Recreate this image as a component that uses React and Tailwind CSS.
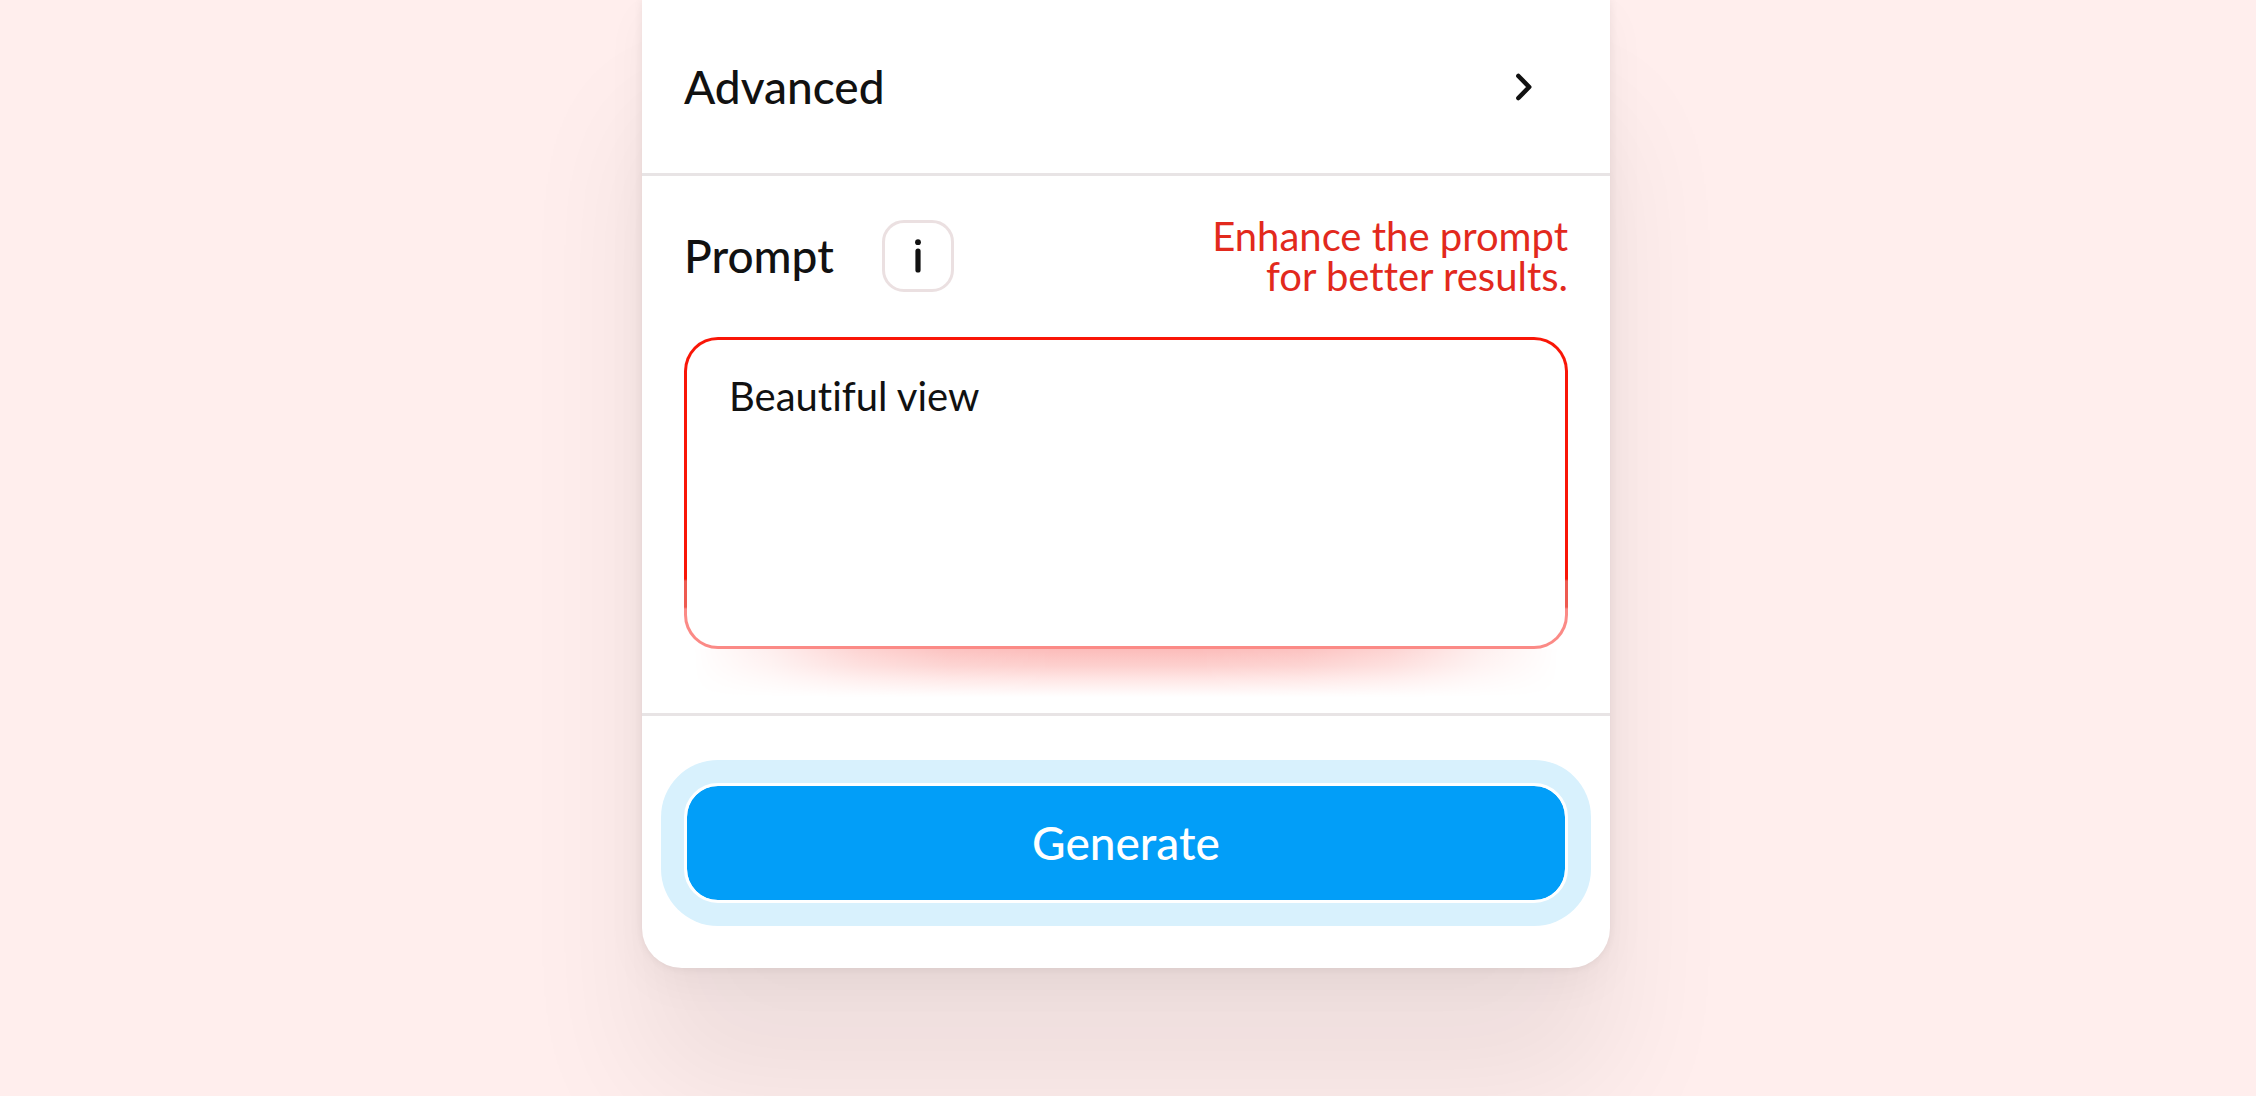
import React, { useState } from 'react';

function ChevronIcon() {
    return (
        <svg className="w-4 h-7" viewBox="0 0 16 28" fill="none" stroke="currentColor" strokeWidth="4.6" strokeLinecap="round" strokeLinejoin="round" aria-hidden="true">
            <path d="M2.4 3L13.2 14L2.4 25" />
        </svg>
    );
}

function InfoIcon() {
    return (
        <svg className="w-2 h-9" viewBox="0 0 8 36" fill="currentColor" aria-hidden="true">
            <circle cx="4" cy="4.2" r="2.9" />
            <rect x="1.4" y="10.5" width="5.2" height="24" rx="2.6" />
        </svg>
    );
}

function App() {
    const [prompt, setPrompt] = useState('Beautiful view');

    return (
        <div className="min-h-screen bg-[#ffeeed] pr-5 pl-4 font-['Lato',sans-serif] text-[#111111] [font-variant-ligatures:none]">
            <main className="mx-auto max-w-[968px] rounded-b-[40px] bg-white shadow-[0_0_10px_rgba(0,0,0,0.07),0_16px_44px_rgba(0,0,0,0.04),0_120px_130px_rgba(0,0,0,0.07)]">
                <button type="button" className="flex h-[176px] w-full items-center justify-between border-b-3 border-[#e8e4e5] pr-[78px] pl-[42px] text-left">
                    <span className="text-[46px] leading-[52px] font-medium">Advanced</span>
                    <ChevronIcon />
                </button>

                <section className="border-b-3 border-[#e8e4e5] px-[42px] pt-10 pb-16">
                    <div className="flex items-center justify-between">
                        <div className="flex items-center gap-12">
                            <label htmlFor="prompt" className="text-[46px] leading-[52px] font-medium">Prompt</label>
                            <button type="button" aria-label="Prompt info" className="flex size-[72px] items-center justify-center rounded-[22px] border-3 border-[#ebe0e1]">
                                <InfoIcon />
                            </button>
                        </div>
                        <p className="text-right text-[40px] leading-10 text-[#e2291d]">
                            Enhance the prompt<br />for better results.
                        </p>
                    </div>

                    <div className="relative mt-[41px] rounded-[34px] bg-[linear-gradient(to_bottom,#f91607_0_242px,#ee5a50_244px_270px,#fb8a86_272px)] p-[3px]">
                        <textarea
                            id="prompt"
                            value={prompt}
                            onChange={(e) => setPrompt(e.target.value)}
                            className="block h-[306px] w-full resize-none rounded-[31px] bg-white px-[42px] py-8 text-[40px] leading-[48px] outline-none"
                        />
                        {/* Warning glow under the field */}
                        <div className="pointer-events-none absolute inset-x-0 top-full h-12 bg-[linear-gradient(to_bottom,#fcbcba_0%,#fdd0ce_35%,#ffe8e7_65%,#ffffff_100%)] mask-[linear-gradient(to_right,transparent_1%,rgba(0,0,0,0.25)_10%,rgba(0,0,0,0.65)_20%,rgba(0,0,0,0.9)_30%,black_42%,black_58%,rgba(0,0,0,0.9)_70%,rgba(0,0,0,0.65)_80%,rgba(0,0,0,0.25)_90%,transparent_99%)]" />
                    </div>
                </section>

                <div className="px-[42px] pt-[67px] pb-[65px]">
                    <button type="button" className="block h-[120px] w-full rounded-[34px] border-3 border-white bg-[#029ef8] bg-clip-padding text-[46px] leading-[52px] font-medium text-white ring-[23px] ring-[#d8f1fd]">
                        Generate
                    </button>
                </div>
            </main>
        </div>
    );
}

export default App;
